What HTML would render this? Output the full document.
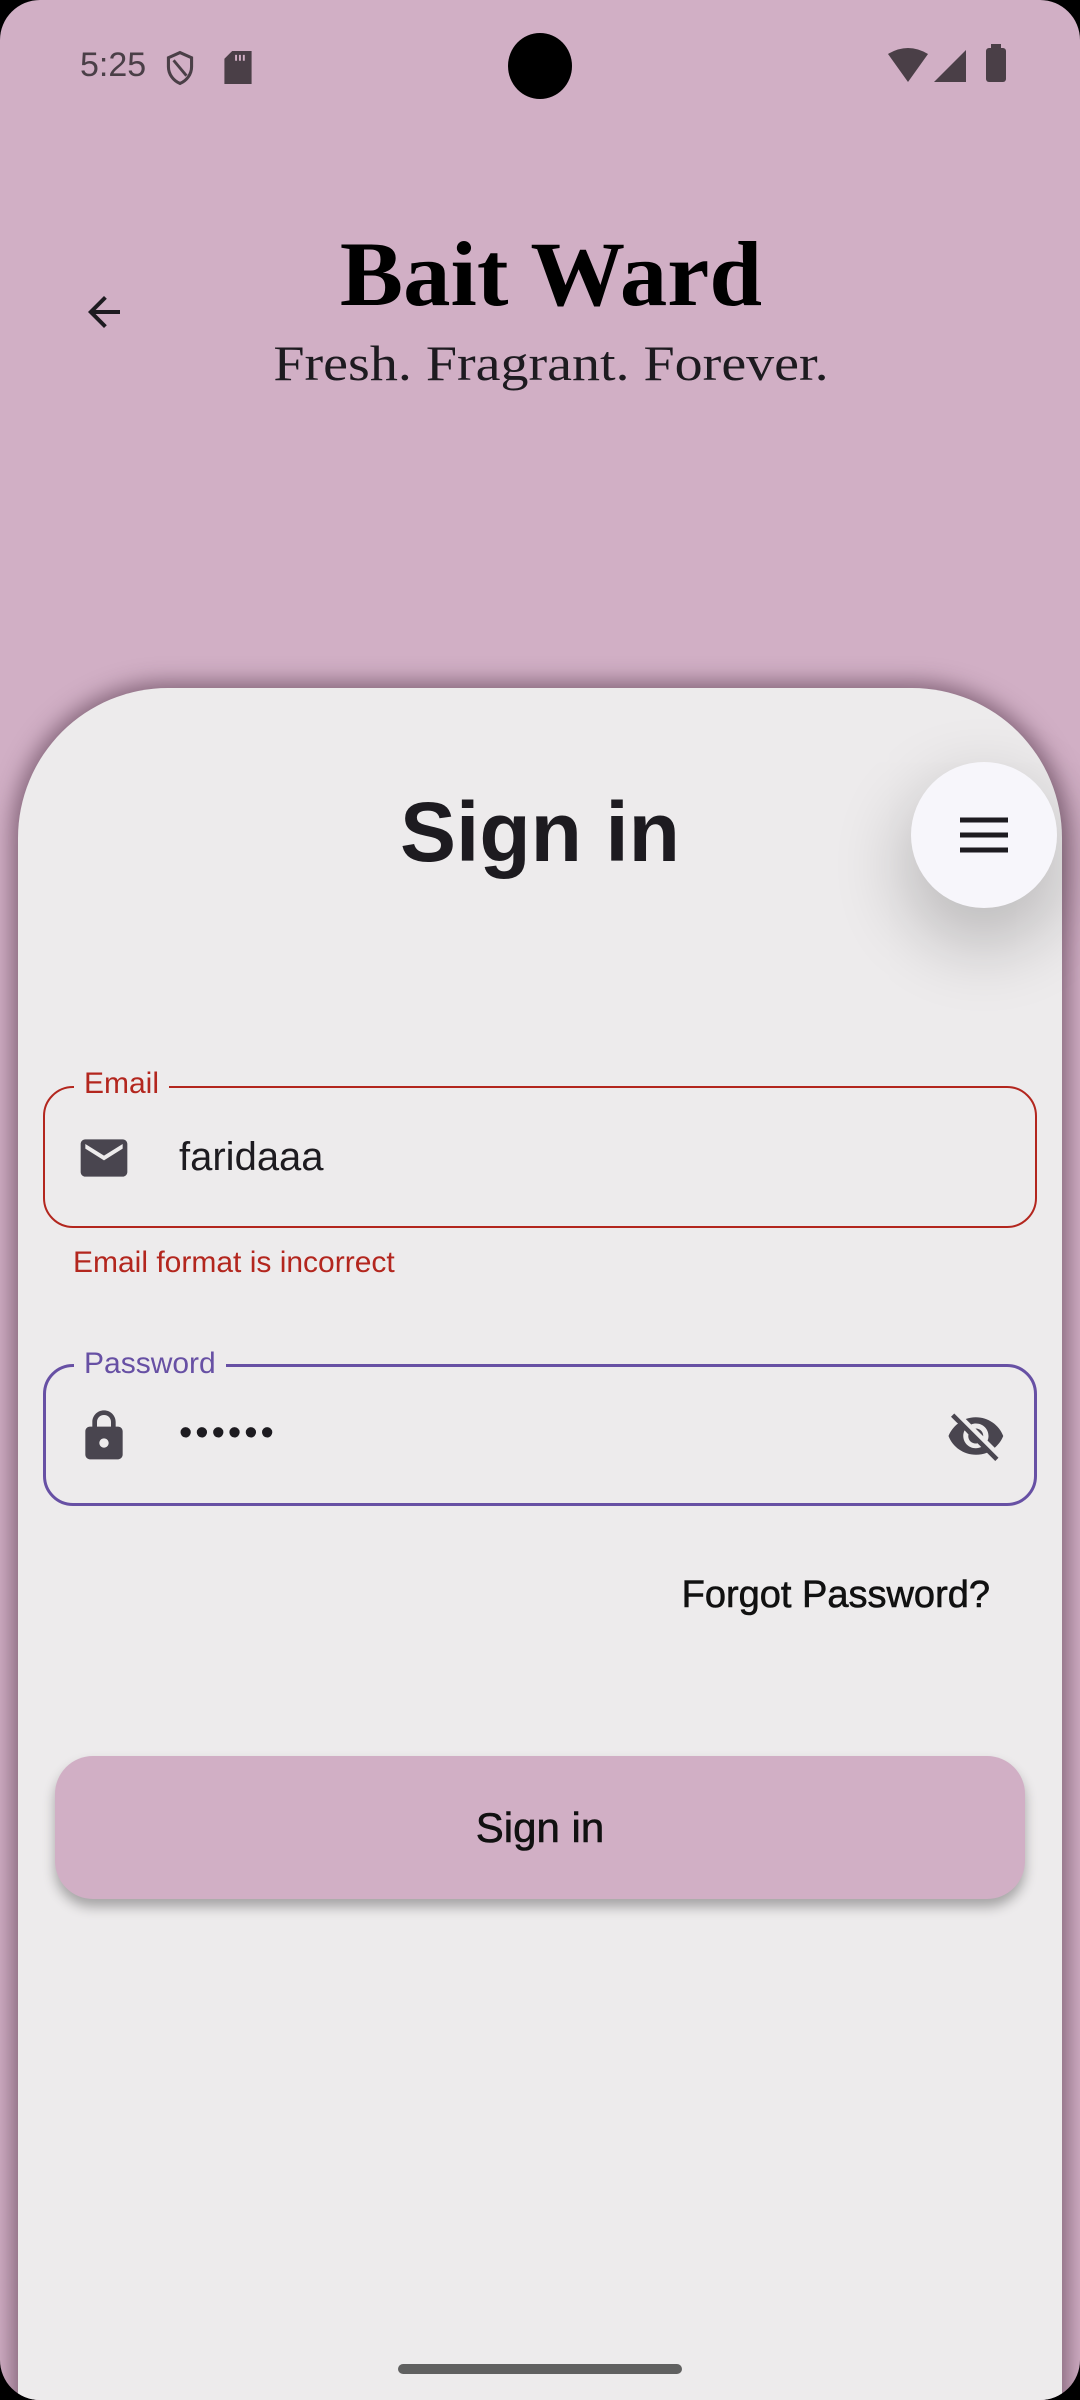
<!DOCTYPE html>
<html><head><meta charset="utf-8"><style>
*{margin:0;padding:0;box-sizing:border-box}
html,body{width:1080px;height:2400px;overflow:hidden;background:#000}
.screen{position:absolute;left:0;top:0;width:1080px;height:2400px;background:#d1afc5;border-radius:40px;overflow:hidden;font-family:"Liberation Sans",sans-serif}
.abs{position:absolute}
.card{position:absolute;left:18px;top:688px;width:1044px;height:1800px;background:#edebec;border-radius:150px 150px 0 0;box-shadow:0 0 22px 6px rgba(70,40,60,.55)}
.field{position:absolute;left:43px;width:994px;height:142px;border-radius:30px}
.lbl{position:absolute;font-size:30px;padding:0 10px;background:#edebec;line-height:30px}
</style></head><body><div class="screen">
<div class="abs" style="left:80px;top:46px;font-size:34px;color:#4a3f47">5:25</div>
<svg class="abs" style="left:164px;top:50px" width="32" height="36" viewBox="0 0 24 28"><path d="M12 2L3 6v7c0 6 4 11 9 13 5-2 9-7 9-13V6z" fill="none" stroke="#4a3f47" stroke-width="2.4"/><path d="M7 8l10 12" stroke="#4a3f47" stroke-width="2.2"/></svg>
<svg class="abs" style="left:224px;top:51px" width="28" height="33" viewBox="0 0 14 17"><path d="M4 0h10v17H0V4z" fill="#4a3f47"/><path d="M6 2v3M8 2v3M10 2v3" stroke="#d1afc5" stroke-width="1"/></svg>
<div class="abs" style="left:508px;top:33px;width:64px;height:66px;border-radius:50%;background:#000"></div>
<svg class="abs" style="left:888px;top:48px" width="40" height="34" viewBox="0 0 40 34"><path d="M0 6Q20-6 40 6L20 34z" fill="#4a3f47"/></svg>
<svg class="abs" style="left:934px;top:50px" width="32" height="32" viewBox="0 0 32 32"><path d="M32 0V32H0z" fill="#4a3f47"/></svg>
<div class="abs" style="left:986px;top:48px;width:20px;height:34px;background:#4a3f47;border-radius:3px"></div>
<div class="abs" style="left:991px;top:44px;width:10px;height:6px;background:#4a3f47"></div>
<svg class="abs" style="left:80px;top:288px" width="48" height="48" viewBox="0 0 24 24"><path d="M20 11H7.8l5.6-5.6L12 4l-8 8 8 8 1.4-1.4L7.8 13H20z" fill="#1d1b20"/></svg>
<div class="abs" style="left:0;width:1102px;top:224px;text-align:center;font-family:'Liberation Serif',serif;font-weight:bold;font-size:92px;line-height:100px;color:#000;transform:scaleX(1.03)">Bait Ward</div>
<div class="abs" style="left:0;width:1102px;top:333px;text-align:center;font-family:'Liberation Serif',serif;font-size:50px;line-height:60px;color:#1d1b20;transform:scaleX(1.12)">Fresh. Fragrant. Forever.</div>
<div class="card"></div>
<div class="abs" style="left:0;width:1080px;top:782px;text-align:center;font-weight:bold;font-size:84px;line-height:100px;color:#1d1b20">Sign in</div>
<div class="abs" style="left:911px;top:762px;width:146px;height:146px;border-radius:50%;background:#f7f6fb;box-shadow:0 30px 70px 10px rgba(0,0,0,.2)"></div>
<svg class="abs" style="left:960px;top:816px" width="48" height="38" viewBox="0 0 48 38"><path d="M0 4h48M0 19h48M0 34h48" stroke="#1d1b20" stroke-width="5"/></svg>
<div class="field" style="top:1086px;border:2px solid #b3261e"></div>
<div class="lbl" style="left:74px;top:1069px;color:#b3261e">Email</div>
<svg class="abs" style="left:76px;top:1130px" width="56" height="56" viewBox="0 0 24 24"><path d="M20 4H4c-1.1 0-2 .9-2 2v12c0 1.1.9 2 2 2h16c1.1 0 2-.9 2-2V6c0-1.1-.9-2-2-2zm0 4l-8 5-8-5V6l8 5 8-5z" fill="#49454f"/></svg>
<div class="abs" style="left:179px;top:1134px;font-size:40px;line-height:46px;color:#1d1b20">faridaaa</div>
<div class="abs" style="left:73px;top:1246px;font-size:30px;line-height:34px;color:#b3261e">Email format is incorrect</div>
<div class="field" style="top:1364px;border:3.5px solid #6750a4"></div>
<div class="lbl" style="left:74px;top:1349px;color:#6750a4">Password</div>
<svg class="abs" style="left:76px;top:1408px" width="56" height="56" viewBox="0 0 24 24"><path d="M18 8h-1V6c0-2.8-2.2-5-5-5S7 3.2 7 6v2H6c-1.1 0-2 .9-2 2v10c0 1.1.9 2 2 2h12c1.1 0 2-.9 2-2V10c0-1.1-.9-2-2-2zm-6 9c-1.1 0-2-.9-2-2s.9-2 2-2 2 .9 2 2-.9 2-2 2zM9 8V6c0-1.7 1.3-3 3-3s3 1.3 3 3v2z" fill="#49454f"/></svg>
<div class="abs" style="left:179px;top:1410px;font-size:38px;line-height:46px;color:#1d1b20;letter-spacing:3px">••••••</div>
<svg class="abs" style="left:946px;top:1406px" width="60" height="60" viewBox="0 0 24 24"><path d="M12 7c2.8 0 5 2.2 5 5 0 .6-.1 1.3-.4 1.8l2.9 2.9c1.5-1.3 2.7-2.9 3.4-4.7-1.700-4.4-6-7.5-11-7.5-1.4 0-2.7.3-4 .7l2.2 2.2c.6-.3 1.2-.4 1.900-.4zM2 4.3l2.3 2.3.5.4C3.1 8.3 1.8 10 1 12c1.7 4.4 6 7.5 11 7.5 1.6 0 3-.3 4.4-.8l.4.4 2.9 2.9 1.3-1.3L3.3 3zM7.5 9.8l1.5 1.6c0 .2-.1.4-.1.6 0 1.7 1.3 3 3 3 .2 0 .4 0 .7-.1l1.5 1.5c-.7.3-1.4.5-2.2.5-2.8 0-5-2.2-5-5 0-.8.2-1.5.5-2.1zm4.3-.8l3.1 3.1V12c0-1.7-1.3-3-3-3z" fill="#49454f"/></svg>
<div class="abs" style="left:560px;width:430px;top:1573px;text-align:right;font-size:38px;line-height:44px;color:#111;-webkit-text-stroke:0.6px #111">Forgot Password?</div>
<div class="abs" style="left:55px;top:1756px;width:970px;height:143px;border-radius:38px;background:#d1afc5;box-shadow:0 8px 12px rgba(0,0,0,.3);text-align:center;line-height:143px;font-size:42px;color:#111;-webkit-text-stroke:0.6px #111">Sign in</div>
<div class="abs" style="left:398px;top:2364px;width:284px;height:10px;border-radius:5px;background:#606060"></div>
</div></body></html>
